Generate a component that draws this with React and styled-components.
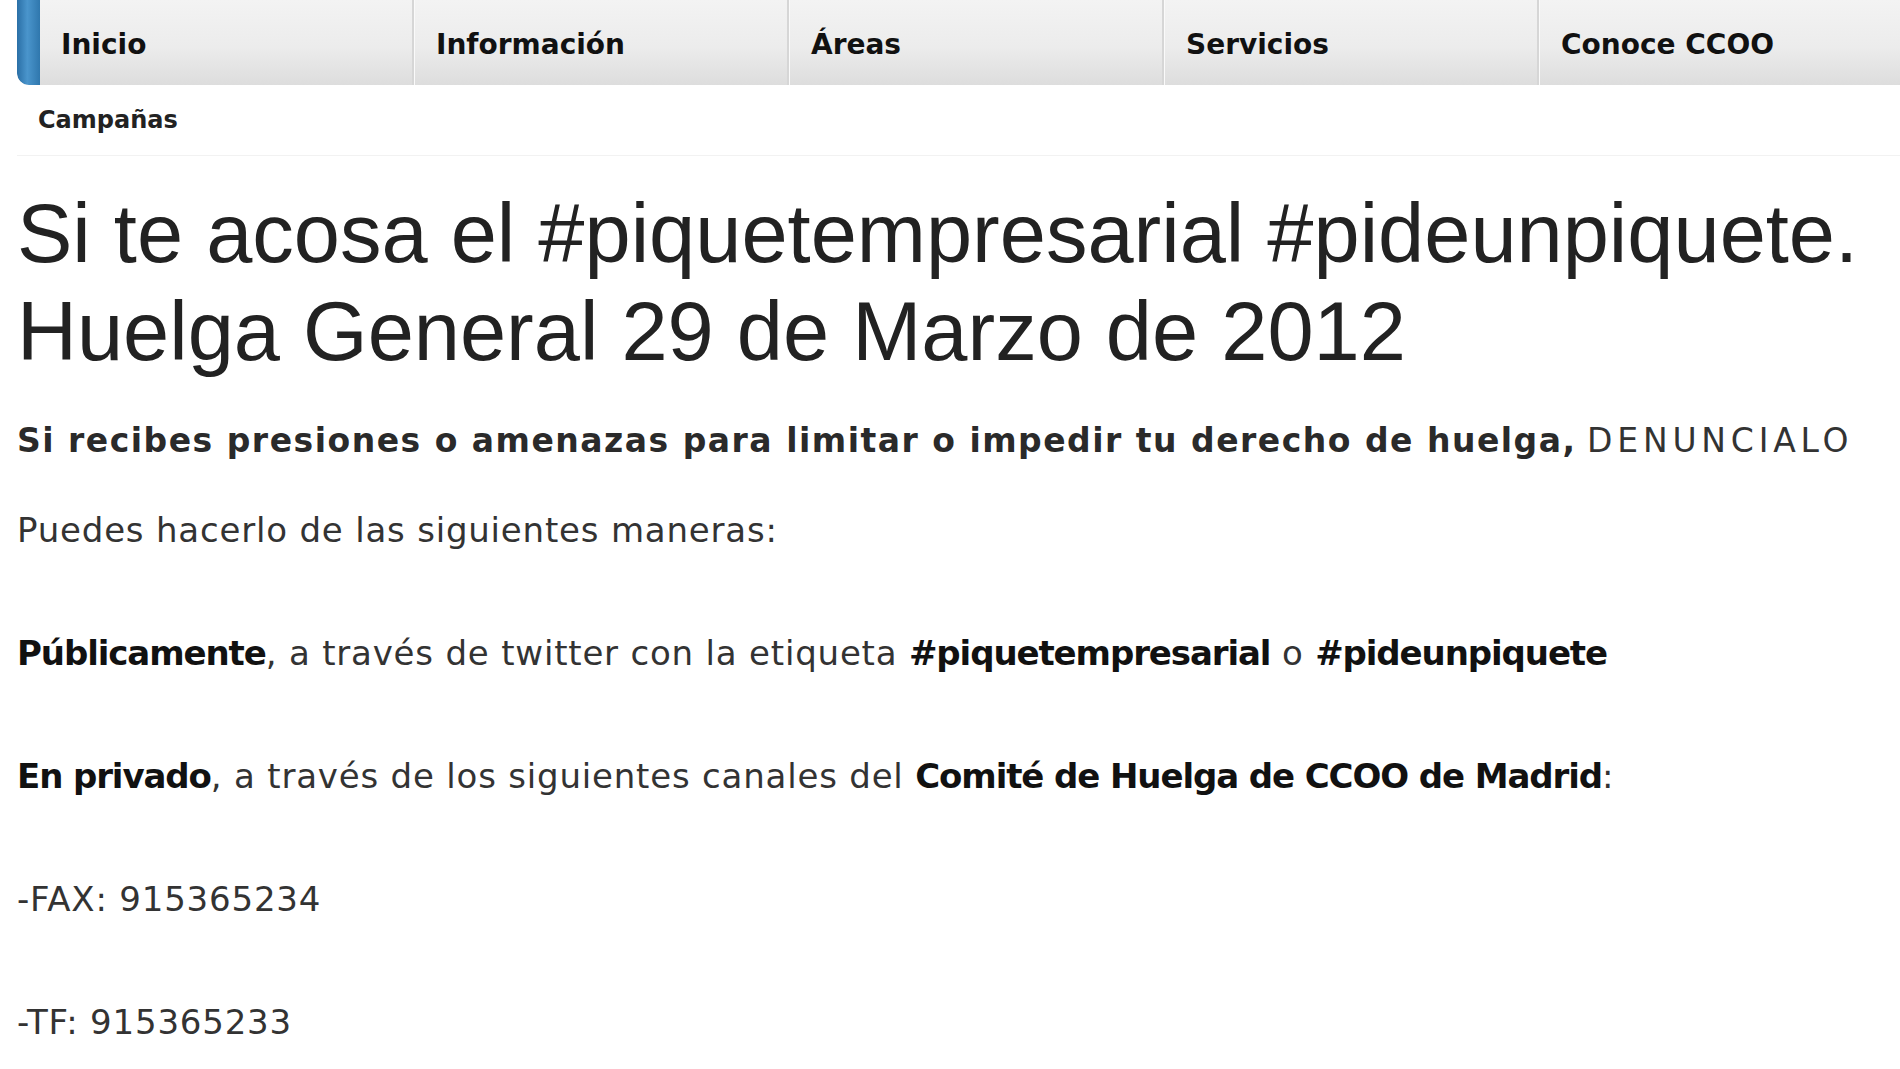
import styled, { createGlobalStyle } from "styled-components";

const navItems = ["Inicio", "Información", "Áreas", "Servicios", "Conoce CCOO"];

export default function App() {
  return (
    <>
      <GlobalStyle />
      <Page>
        <NavBar>
          <NavAccent />
          {navItems.map((item, index) => (
            <NavItem key={item} $last={index === navItems.length - 1}>
              {item}
            </NavItem>
          ))}
        </NavBar>
        <SubNav>
          <SubNavLink>Campañas</SubNavLink>
        </SubNav>

        <Title>
          Si te acosa el #piquetempresarial #pideunpiquete.
          <br />
          Huelga General 29 de Marzo de 2012
        </Title>

        <Lead>
          <strong>
            Si recibes presiones o amenazas para limitar o impedir tu derecho de
            huelga,
          </strong>{" "}
          <Shout>DENUNCIALO</Shout>
        </Lead>

        <Paragraph>Puedes hacerlo de las siguientes maneras:</Paragraph>
        <Paragraph>
          <strong>Públicamente</strong>, a través de twitter con la etiqueta{" "}
          <strong>#piquetempresarial</strong> o <strong>#pideunpiquete</strong>
        </Paragraph>
        <Paragraph>
          <strong>En privado</strong>, a través de los siguientes canales del{" "}
          <strong>Comité de Huelga de CCOO de Madrid</strong>:
        </Paragraph>
        <Paragraph>-FAX: 915365234</Paragraph>
        <Paragraph>-TF: 915365233</Paragraph>
      </Page>
    </>
  );
}

const GlobalStyle = createGlobalStyle`
  html, body {
    margin: 0;
    padding: 0;
    background: #ffffff;
  }
  body {
    font-family: "DejaVu Sans", Verdana, sans-serif;
    color: #333;
    overflow: hidden;
  }
`;

const Page = styled.div`
  padding-left: 17px;
  min-height: 1069px;
  box-sizing: border-box;
`;

const NavBar = styled.nav`
  display: flex;
  height: 85px;
  background: linear-gradient(to bottom, #f3f3f3 0%, #ececec 55%, #dddddd 100%);
  border-bottom-left-radius: 12px;
  overflow: hidden;
`;

const NavAccent = styled.div`
  width: 23px;
  flex-shrink: 0;
  background: linear-gradient(to right, #2a6fa6 0%, #4a95cc 45%, #2f77ad 100%);
  border-bottom-left-radius: 12px;
`;

const NavItem = styled.div`
  display: flex;
  align-items: center;
  box-sizing: border-box;
  width: ${({ $last }) => ($last ? "auto" : "375px")};
  flex: ${({ $last }) => ($last ? "1" : "none")};
  padding-left: 21px;
  padding-top: 4px;
  font-family: "DejaVu Sans", Verdana, sans-serif;
  font-weight: 700;
  font-size: 28px;
  color: #111;
  border-right: ${({ $last }) => ($last ? "none" : "1px solid #fafafa")};
  box-shadow: ${({ $last }) => ($last ? "none" : "inset -2px 0 0 #d6d6d6")};
`;

const SubNav = styled.div`
  display: flex;
  align-items: center;
  height: 70px;
  padding-left: 21px;
  border-bottom: 1px solid #f2f2f2;
`;

const SubNavLink = styled.span`
  font-family: "DejaVu Sans", Verdana, sans-serif;
  font-weight: 700;
  font-size: 24px;
  color: #222;
`;

const Title = styled.h1`
  margin: 29px 0 0;
  font-family: "Liberation Sans", Arial, sans-serif;
  font-weight: 400;
  font-size: 83px;
  line-height: 98px;
  color: #222;
  white-space: nowrap;
`;

const Lead = styled.p`
  margin: 40px 0 0;
  font-size: 33px;
  line-height: 40px;
  color: #333;
  white-space: nowrap;
  strong {
    color: #2a2a2a;
    letter-spacing: 1.5px;
  }
`;

const Shout = styled.span`
  letter-spacing: 4.8px;
`;

const Paragraph = styled.p`
  margin: 49px 0 0;
  font-size: 34px;
  line-height: 41px;
  letter-spacing: 0.8px;
  color: #333;
  white-space: nowrap;
  & + & {
    margin-top: 82px;
  }
  strong {
    color: #111;
    letter-spacing: -1.1px;
  }
`;
